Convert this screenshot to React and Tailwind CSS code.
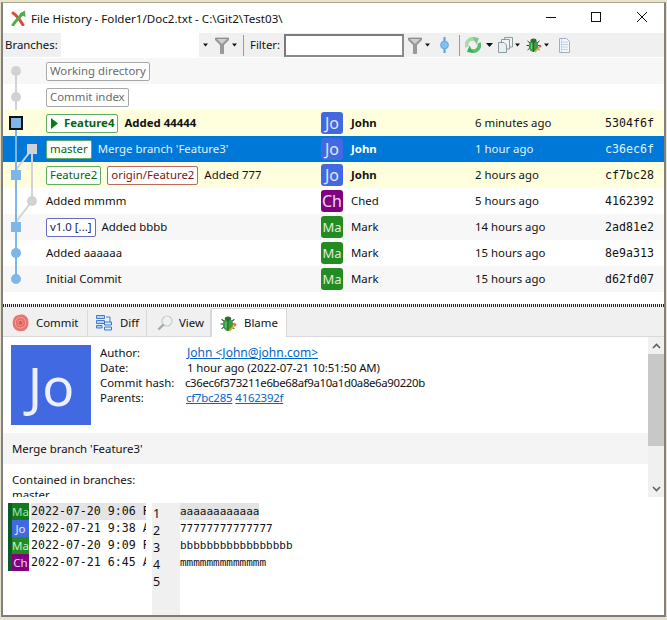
import React from "react";

const SANS = "font-['Noto_Sans',sans-serif]";
const MONO = "font-['DejaVu_Sans_Mono',monospace]";

const Logo = () => (
  <svg width="16" height="16" viewBox="0 0 16 16" className="shrink-0">
    <path d="M2 3 C5 5 9 10 12 15" stroke="#e04a3c" strokeWidth="3" fill="none" strokeLinecap="round" />
    <path d="M2 15 C5 10 8 8 11 4" stroke="#4fb04a" strokeWidth="3" fill="none" strokeLinecap="round" />
    <path d="M8 4 L14 0.5 L14.5 7 Z" fill="#4fb04a" />
  </svg>
);
const Arrow = ({ w = 7 }) => (
  <svg width={w} height="4" viewBox="0 0 7 4" className="shrink-0"><path d="M0 0H7L3.5 4Z" fill="#111" /></svg>
);
const Funnel = () => (
  <svg width="14" height="17" viewBox="0 0 14 17" className="shrink-0">
    <path d="M0.5 1H13.5V3L8.5 8V16.5H5.5V8L0.5 3Z" fill="#9a9a9a" stroke="#777" strokeWidth="0.6" />
    <path d="M2 2H12L7.5 6.5H6.5Z" fill="#cfcfcf" />
  </svg>
);
const Pin = () => (
  <svg width="9" height="16" viewBox="0 0 9 16" className="shrink-0">
    <path d="M4.5 0V16" stroke="#5aa0e0" strokeWidth="2" />
    <circle cx="4.5" cy="8" r="4" fill="#7cc0f4" stroke="#4b93d6" strokeWidth="0.6" />
  </svg>
);
const Refresh = () => (
  <svg width="16" height="16" viewBox="0 0 16 16" className="shrink-0">
    <path d="M2 10 A6 6 0 0 1 10 2.4" stroke="#a6d8aa" strokeWidth="3.6" fill="none" />
    <path d="M7.5 0 L14 1 L11.5 7.5 Z" fill="#7cc888" />
    <path d="M14 6 A6 6 0 0 1 6 13.6" stroke="#5abb6a" strokeWidth="3.6" fill="none" />
    <path d="M8.5 16 L2 15 L4.5 8.5 Z" fill="#3fae55" />
  </svg>
);
const Docs = () => (
  <svg width="15" height="16" viewBox="0 0 15 16" className="shrink-0">
    <path d="M6.5 .5H14.5V10H6.5Z" fill="#f2f5f5" stroke="#8b9a9a" />
    <path d="M3.5 2.5H11.5V12H3.5Z" fill="#f2f5f5" stroke="#8b9a9a" />
    <path d="M.5 5.5H6L8.5 8V15.5H.5Z" fill="#e9f0f0" stroke="#8b9a9a" />
  </svg>
);
const Bug = ({ s = 16 }) => (
  <svg width={s} height={s} viewBox="0 0 16 16" className="shrink-0">
    <path d="M1.5 4L4 6M.5 8.5H4M1.5 13L4 11M13.5 4L11 6M14.5 8.5H11M13.5 13L11 11" stroke="#2b4a2b" strokeWidth="1" />
    <ellipse cx="7.5" cy="9" rx="4.8" ry="6" fill="#3f9a45" />
    <ellipse cx="7.5" cy="3.4" rx="3" ry="2" fill="#2c6e33" />
    <path d="M7.5 4V15" stroke="#1f5a28" strokeWidth="0.8" />
    <path d="M5.5 6.5V12" stroke="#79c87c" strokeWidth="1" />
    <path d="M9 15L14.5 9" stroke="#e8b230" strokeWidth="1.8" />
    <path d="M13.8 9.8L15 8.5" stroke="#e0584a" strokeWidth="1.8" />
  </svg>
);
const Note = () => (
  <svg width="11" height="15" viewBox="0 0 11 15" className="shrink-0">
    <path d="M.5 .5H7.5L10.5 3.5V14.5H.5Z" fill="#f4f7fb" stroke="#9fb0c4" />
    <path d="M2 4H9M2 6.5H9M2 9H9M2 11.5H9" stroke="#b8c8dc" strokeWidth="0.8" />
    <path d="M2.5 1V14" stroke="#eeb4b4" strokeWidth="0.7" />
  </svg>
);
const Seal = () => (
  <svg width="17" height="18" viewBox="0 0 17 18" className="shrink-0">
    <path d="M8.5 .6C11.5 .2 15.5 2 16.3 6.5C17 11 15.5 15 12 16.8C8 18 3.5 17 1.4 13C0 9 .6 4 4 1.8Z" fill="#e8756e" />
    <circle cx="8.5" cy="8.8" r="5.2" fill="#e46d66" stroke="#f2a8a2" strokeWidth="1" />
    <circle cx="8.5" cy="8.8" r="2.6" fill="#d95c55" stroke="#f2a8a2" strokeWidth="0.8" />
  </svg>
);
const DiffIcon = () => (
  <svg width="16" height="16" viewBox="0 0 16 16" className="shrink-0">
    <path d="M.5 .5H8.5V3.5H.5ZM.5 5.5H8.5V8.5H.5ZM.5 10.5H6V13H.5Z" fill="#b8d4f4" stroke="#2f6fce" strokeWidth="0.9" />
    <path d="M8.5 7H15.5V10H8.5ZM8.5 12H15.5V15H8.5Z" fill="#dbe9fa" stroke="#2f6fce" strokeWidth="0.9" />
    <path d="M10 2H14V7" fill="none" stroke="#2f6fce" strokeWidth="0.9" />
  </svg>
);
const Lens = () => (
  <svg width="16" height="16" viewBox="0 0 16 16" className="shrink-0">
    <circle cx="10" cy="6" r="5" fill="#eef2f4" stroke="#c8cccc" strokeWidth="1.2" />
    <path d="M6.5 9.5L1.5 14.5" stroke="#a8a8a8" strokeWidth="2.4" />
  </svg>
);

const Ref = ({ color, children, bold }) => (
  <span className={`inline-flex h-[19px] items-center rounded-[2px] border bg-white px-[3px] pb-[2px] ${bold ? "font-bold" : ""} ${color}`}>
    {children}
  </span>
);

const Avatar = ({ bg, t }) => (
  <div className={`-ml-[3px] flex h-[22px] w-[22px] items-center justify-center rounded-[3px] leading-none text-white/85 ${t === "Ma" ? "text-[13px]" : "text-[16px]"} ${bg}`}>{t}</div>
);

const BLUE = "bg-[#4169e1]";
const PURPLE = "bg-[#800080]";
const GREEN = "bg-[#228b22]";

const rows = [
  { bg: "bg-[#f7f7f7]", refs: <Ref color="border-[#a8a8a8] text-[#6a6a6a]">Working directory</Ref> },
  { bg: "bg-white", refs: <Ref color="border-[#a8a8a8] text-[#6a6a6a]">Commit index</Ref> },
  {
    bg: "bg-[#ffffdd]",
    bold: true,
    refs: (
      <Ref bold color="border-[#5fae63] text-[#0a6410]">
        <svg width="8" height="11" viewBox="0 0 8 11" className="mt-[2px] mr-[5px] ml-[1px]"><path d="M0 0L7 5.5L0 11Z" fill="#0a7a12" /></svg>
        Feature4
      </Ref>
    ),
    msg: "Added 44444",
    av: [BLUE, "Jo"], author: "John", date: "6 minutes ago", hash: "5304f6f",
  },
  {
    bg: "bg-[#0078d7]", sel: true,
    refs: <Ref color="border-[#5fae63] text-[#0a6410]">master</Ref>,
    msg: "Merge branch 'Feature3'",
    av: [BLUE, "Jo"], author: "John", date: "1 hour ago", hash: "c36ec6f", authorBold: true,
  },
  {
    bg: "bg-[#ffffdd]",
    refs: (
      <>
        <Ref color="border-[#5fae63] text-[#0a6410]">Feature2</Ref>
        <Ref color="border-[#b86a6a] text-[#7a1616]">origin/Feature2</Ref>
      </>
    ),
    msg: "Added 777",
    av: [BLUE, "Jo"], author: "John", date: "2 hours ago", hash: "cf7bc28", authorBold: true,
  },
  { bg: "bg-white", msg: "Added mmmm", av: [PURPLE, "Ch"], author: "Ched", date: "5 hours ago", hash: "4162392" },
  {
    bg: "bg-[#f7f7f7]",
    refs: <Ref color="border-[#6a6ac0] text-[#20206a]">v1.0 [...]</Ref>,
    msg: "Added bbbb",
    av: [GREEN, "Ma"], author: "Mark", date: "14 hours ago", hash: "2ad81e2",
  },
  { bg: "bg-white", msg: "Added aaaaaa", av: [GREEN, "Ma"], author: "Mark", date: "15 hours ago", hash: "8e9a313" },
  { bg: "bg-[#f7f7f7]", msg: "Initial Commit", av: [GREEN, "Ma"], author: "Mark", date: "15 hours ago", hash: "d62fd07" },
];

const blame = [
  { bg: "bg-[#117a20]", t: "Ma", text: "2022-07-20 9:06 P", code: "aaaaaaaaaaaa", hl: true, tc: "text-[#a8e0a8]" },
  { bg: BLUE, t: "Jo", text: "2022-07-21 9:38 A", code: "77777777777777", tc: "text-white/85" },
  { bg: GREEN, t: "Ma", text: "2022-07-20 9:09 P", code: "bbbbbbbbbbbbbbbbb", tc: "text-[#c8f0c8]" },
  { bg: PURPLE, t: "Ch", text: "2022-07-21 6:45 A", code: "mmmmmmmmmmmmm", tc: "text-white/85" },
];

const Tab = ({ icon, label, w, pl, gap, active }) => (
  <div
    className={`flex items-center ${w} ${pl} ${gap} ${
      active
        ? "mt-[1px] h-[29px] border border-b-0 border-[#d9d9d9] bg-white"
        : "mt-[3px] h-[26px] border-r border-[#d9d9d9]"
    }`}
  >
    {icon}
    <span className="pb-[2px]">{label}</span>
  </div>
);

export default function App() {
  return (
    <div className={`h-[620px] w-[667px] overflow-hidden bg-[#e7e3cd] pt-[2px] pl-[1px] text-[11.4px] leading-[15px] text-[#111] ${SANS}`}>
      <div className="flex h-[615px] w-[665px] flex-col overflow-hidden border-x-2 border-b-2 border-t border-[#7c7c7c] border-t-[#a8a890] border-x-[#808080] bg-[#f0f0f0]">
        {/* title bar */}
        <div className="flex h-[30px] shrink-0 items-center bg-white pl-[8px]">
          <Logo />
          <span className="ml-[4px] text-[11.6px]">File History - Folder1/Doc2.txt - C:\Git2\Test03\</span>
          <div className="mb-[2px] ml-auto flex items-center pr-[17px]">
            <svg width="10" height="10" viewBox="0 0 10 10"><path d="M0 5.5H10" stroke="#111" /></svg>
            <svg width="10" height="10" viewBox="0 0 10 10" className="ml-[35px]"><rect x=".5" y=".5" width="9" height="9" fill="none" stroke="#111" /></svg>
            <svg width="10" height="10" viewBox="0 0 10 10" className="ml-[36px]"><path d="M0 0L10 10M10 0L0 10" stroke="#111" /></svg>
          </div>
        </div>

        {/* toolbar */}
        <div className="flex h-[24px] shrink-0 items-center bg-[#f0f0f0] pl-[2px]">
          <span className="w-[56px] pb-[2px]">Branches:</span>
          <div className="h-[24px] w-[138px] bg-white" />
          <div className="flex w-[12px] justify-center pl-[1px]"><Arrow w={5} /></div>
          <div className="ml-[4px] flex items-center gap-[3px]"><Funnel /><Arrow w={5} /></div>
          <div className="ml-[6px] h-[21px] w-[1px] bg-[#9a9a9a]" />
          <span className="ml-[6px] w-[34px] pb-[2px]">Filter:</span>
          <div className="h-[23px] w-[120px] border-2 border-[#7a7a7a] border-b-[#8a8a8a] border-r-[#8a8a8a] bg-white" />
          <div className="ml-[4px] flex items-center gap-[3px]"><Funnel /><Arrow w={5} /></div>
          <div className="ml-[10px]"><Pin /></div>
          <div className="ml-[10px] h-[21px] w-[1px] bg-[#9a9a9a]" />
          <div className="ml-[5px] flex items-center gap-[5px]"><Refresh /><Arrow /></div>
          <div className="ml-[5px] flex items-center gap-[2px]"><Docs /><Arrow w={5} /></div>
          <div className="ml-[6px] flex items-center gap-[2px]"><Bug /><Arrow w={5} /></div>
          <div className="ml-[10px]"><Note /></div>
        </div>

        {/* commit list */}
        <div className="relative h-[246px] shrink-0 bg-white pt-[1px]">
          {rows.map((r, i) => (
            <div key={i} className={`flex h-[26px] items-center ${r.bg} ${r.sel ? "text-white" : ""}`}>
              <div className="flex w-[321px] shrink-0 items-center gap-[6px] pl-[43px] whitespace-nowrap">
                {r.refs}
                {r.msg && (
                  <span className={`pb-[2px] ${r.bold ? "font-bold" : ""} ${r.sel ? "text-[#e4f0fa]" : ""}`}>{r.msg}</span>
                )}
              </div>
              {r.av && (
                <>
                  <Avatar bg={r.av[0]} t={r.av[1]} />
                  <span className={`ml-[8px] w-[124px] pb-[2px] ${r.bold || r.authorBold ? "font-bold" : ""}`}>{r.author}</span>
                  <span className={`w-[130px] pb-[2px] ${r.sel ? "text-[#e4f0fa]" : ""}`}>{r.date}</span>
                  <span className={`${MONO} text-[11.6px] ${r.sel ? "text-[#e4f0fa]" : ""}`}>{r.hash}</span>
                </>
              )}
            </div>
          ))}
          <svg width="44" height="240" viewBox="0 0 44 240" className="absolute top-[1px] left-[-1px]">
            <path d="M14 13V52" stroke="#d2d2d2" strokeWidth="2" />
            <path d="M30 91V143" stroke="#d2d2d2" strokeWidth="2" />
            <path d="M30 91L14 112" stroke="#d2d2d2" strokeWidth="2" />
            <path d="M30 143L14 164" stroke="#d2d2d2" strokeWidth="2" />
            <path d="M14 65V221" stroke="#7db7ea" strokeWidth="2" />
            <circle cx="14" cy="13" r="5" fill="#d2d2d2" />
            <circle cx="14" cy="39" r="5" fill="#d2d2d2" />
            <rect x="8" y="59" width="12" height="12" fill="#7db7ea" stroke="#111" strokeWidth="2" />
            <rect x="25" y="86" width="10" height="10" fill="#d2d2d2" />
            <rect x="9" y="112" width="10" height="10" fill="#7db7ea" />
            <circle cx="30" cy="143" r="5" fill="#d2d2d2" />
            <rect x="9" y="164" width="10" height="10" fill="#7db7ea" />
            <circle cx="14" cy="195" r="5" fill="#7db7ea" />
            <circle cx="14" cy="221" r="5" fill="#7db7ea" />
          </svg>
        </div>

        {/* splitter */}
        <div className="h-[1px] shrink-0 bg-white" />
        <div className="h-[3px] shrink-0 bg-[repeating-linear-gradient(90deg,#222_0,#222_1px,#f4f4f4_1px,#f4f4f4_2px)]" />

        {/* tabs */}
        <div className="flex h-[30px] shrink-0 items-start border-b border-[#d9d9d9] bg-[#f0f0f0] pl-[1px]">
          <Tab icon={<Seal />} label="Commit" w="w-[84px]" pl="pl-[8px]" gap="gap-[7px]" />
          <Tab icon={<DiffIcon />} label="Diff" w="w-[59px]" pl="pl-[8px]" gap="gap-[8px]" />
          <Tab icon={<Lens />} label="View" w="w-[64px]" pl="pl-[10px]" gap="gap-[6px]" />
          <Tab icon={<Bug s={17} />} label="Blame" w="w-[76px]" pl="pl-[8px]" gap="gap-[7px]" active />
        </div>

        {/* commit details */}
        <div className="flex h-[160px] shrink-0 overflow-hidden bg-white">
          <div className="min-w-0 flex-1 overflow-hidden">
            <div className="flex h-[96px] pt-[8px] pl-[8px]">
              <div className={`flex h-[80px] w-[80px] shrink-0 items-center justify-center text-[53px] leading-none text-white/90 ${BLUE}`}>Jo</div>
              <div className="ml-[9px]">
                <div className="flex h-[15px]"><span className="w-[87px]">Author:</span><span className="text-[12px] text-[#0066cc] underline">John &lt;John@john.com&gt;</span></div>
                <div className="flex h-[15px]"><span className="w-[87px]">Date:</span><span className="tracking-[-0.1px]">1 hour ago (2022-07-21 10:51:50 AM)</span></div>
                <div className="flex h-[15px]"><span className="w-[85px]">Commit hash:</span><span className="tracking-[-0.35px]">c36ec6f373211e6be68af9a10a1d0a8e6a90220b</span></div>
                <div className="flex h-[15px]"><span className="w-[86px]">Parents:</span><span className="tracking-[-0.2px] text-[#0066cc] underline">cf7bc285</span><span className="ml-[3px] tracking-[-0.2px] text-[#0066cc] underline">4162392f</span></div>
              </div>
            </div>
            <div className="flex h-[31px] items-center bg-[#f4f4f4] pl-[9px]">Merge branch 'Feature3'</div>
            <div className="pt-[8px] pl-[9px]">
              <div>Contained in branches:</div>
              <div>master</div>
            </div>
          </div>
          <div className="flex w-[16px] shrink-0 flex-col items-center bg-[#f0f0f0]">
            <div className="flex h-[17px] items-center">
              <svg width="9" height="6" viewBox="0 0 9 6"><path d="M1 5L4.5 1.5L8 5" fill="none" stroke="#606060" strokeWidth="1.6" /></svg>
            </div>
            <div className="h-[92px] w-full bg-[#c8c8c8]" />
            <div className="flex-1" />
            <div className="flex h-[17px] items-center">
              <svg width="9" height="6" viewBox="0 0 9 6"><path d="M1 1L4.5 4.5L8 1" fill="none" stroke="#606060" strokeWidth="1.6" /></svg>
            </div>
          </div>
        </div>

        {/* blame */}
        <div className="flex min-h-0 flex-1 bg-white pl-[5px]">
          <div className="w-[138px] shrink-0 overflow-hidden pt-[6px]">
            {blame.map((b, i) => (
              <div key={i} className="flex h-[17px] items-center">
                <div className="h-[17px] w-[4px] shrink-0 bg-[#0c5a2a]" />
                <div className={`flex h-[17px] w-[17px] shrink-0 items-center justify-center text-[11.5px] ${b.bg} ${b.tc}`}>{b.t}</div>
                <div className={`ml-[2px] h-[17px] flex-1 overflow-hidden whitespace-nowrap ${MONO} text-[11.6px] leading-[17px] ${b.hl ? "bg-[#e4e4e4]" : ""}`}>{b.text}</div>
              </div>
            ))}
          </div>
          <div className="mt-[6px] ml-[6px] w-[28px] shrink-0 bg-[#f0f0f0] pt-[2px] pl-[1px] text-[12.5px]">
            {[1, 2, 3, 4, 5].map((n) => (
              <div key={n} className="h-[17px] leading-[17px]">{n}</div>
            ))}
          </div>
          <div className={`${MONO} pt-[6px] text-[11px]`}>
            {blame.map((b, i) => (
              <div key={i} className="h-[17px] leading-[17px]">
                <span className={`inline-block h-[17px] ${b.hl ? "bg-[#e4e4e4]" : ""}`}>{b.code}</span>
              </div>
            ))}
          </div>
        </div>
      </div>
    </div>
  );
}
